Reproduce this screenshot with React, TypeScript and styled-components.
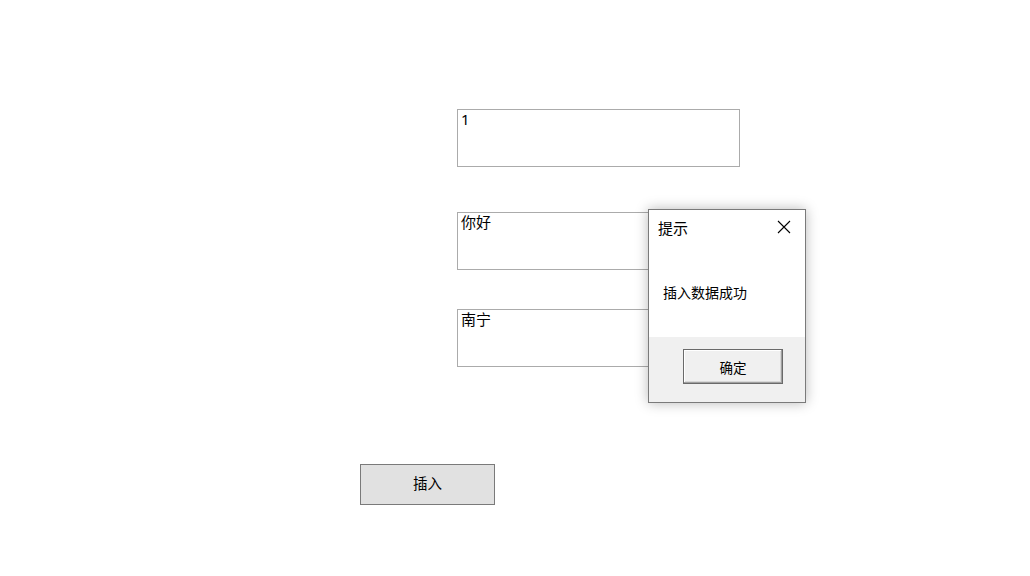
import React from "react";
import styled, { createGlobalStyle } from "styled-components";

const Global = createGlobalStyle`
  html, body { margin: 0; padding: 0; background: #ffffff; }
  body { font-family: "Noto Sans", "Noto Sans CJK SC", sans-serif; }
`;

const Page = styled.div`
  position: relative;
  width: 1030px;
  height: 576px;
  overflow: hidden;
`;

const Form = styled.div`
  display: flex;
  flex-direction: column;
  align-items: flex-start;
  padding-top: 109px;
`;

const Field = styled.div<{ $gap: number }>`
  box-sizing: border-box;
  margin-left: 457px;
  margin-bottom: ${(p) => p.$gap}px;
  width: 283px;
  height: 58px;
  border: 1px solid #ababab;
  background: #fff;
  padding: 0 3px;
  font-family: "Noto Sans", "Noto Sans CJK SC", sans-serif;
  font-size: 15px;
  line-height: 18px;
  color: #000;
`;

const InsertButton = styled.button`
  box-sizing: border-box;
  margin-left: 360px;
  width: 135px;
  height: 41px;
  background: #e1e1e1;
  border: 1px solid #7a7a7a;
  font-family: "Noto Sans CJK SC", sans-serif;
  font-size: 14.5px;
  line-height: 16px;
  color: #000;
  padding: 0 0 3px 0;
`;

const Dialog = styled.div`
  position: absolute;
  left: 648px;
  top: 209px;
  width: 158px;
  height: 194px;
  box-sizing: border-box;
  border: 1px solid #7a7a7a;
  background: #fff;
  box-shadow: 0 0 12px rgba(0, 0, 0, 0.28);
  display: flex;
  flex-direction: column;
`;

const TitleBar = styled.div`
  display: flex;
  align-items: center;
  justify-content: space-between;
  height: 34px;
  padding: 0 14px 0 9px;
  font-family: "Noto Sans CJK SC", sans-serif;
  font-size: 15px;
  color: #000;
`;

const Body = styled.div`
  flex: 1;
  padding: 40px 0 0 14px;
  font-family: "Noto Sans CJK SC", sans-serif;
  font-size: 14px;
  line-height: 16px;
  color: #000;
`;

const Footer = styled.div`
  height: 65px;
  background: #f0f0f0;
  display: flex;
  justify-content: center;
  padding-top: 12px;
  box-sizing: border-box;
`;

const OkButton = styled.button`
  box-sizing: border-box;
  width: 100px;
  height: 35px;
  margin-left: 12px;
  background: #f0f0f0;
  border: 1px solid #6a6a6a;
  box-shadow: inset -1px -1px 0 #a0a0a0, inset 1px 1px 0 #ffffff, inset -2px -2px 0 #d8d8d8;
  font-family: "Noto Sans CJK SC", sans-serif;
  font-size: 13.5px;
  line-height: 16px;
  color: #000;
  padding: 0;
`;

export default function App() {
  return (
    <Page>
      <Global />
      <Form>
        <Field $gap={45}>1</Field>
        <Field $gap={39}>你好</Field>
        <Field $gap={97}>南宁</Field>
        <InsertButton>插入</InsertButton>
      </Form>
      <Dialog>
        <TitleBar>
          <span>提示</span>
          <svg width="14" height="14" viewBox="0 0 14 14">
            <path d="M1 1 L13 13 M13 1 L1 13" stroke="#000" strokeWidth="1.1" />
          </svg>
        </TitleBar>
        <Body>插入数据成功</Body>
        <Footer>
          <OkButton>确定</OkButton>
        </Footer>
      </Dialog>
    </Page>
  );
}
